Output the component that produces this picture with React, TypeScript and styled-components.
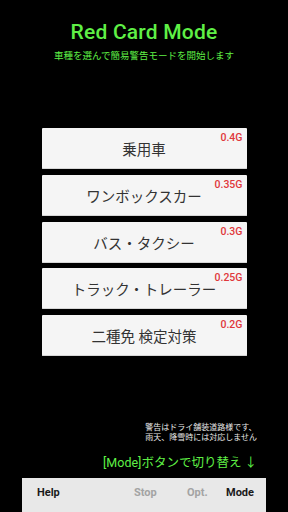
import React from "react";
import styled, { createGlobalStyle } from "styled-components";

const GlobalStyle = createGlobalStyle`
  html, body {
    margin: 0;
    padding: 0;
    background: #000;
  }
  body {
    font-family: Roboto, "Noto Sans CJK JP", sans-serif;
  }
`;

const Screen = styled.div`
  width: 288px;
  height: 512px;
  background: #000;
  display: flex;
  flex-direction: column;
  align-items: center;
  overflow: hidden;
`;

const Title = styled.h1`
  margin: 18px 0 0;
  font-size: 21px;
  font-weight: 500;
  color: #5ff046;
  line-height: 28px;
  letter-spacing: 0.2px;
`;

const Subtitle = styled.div`
  margin-top: 3px;
  font-size: 9.5px;
  color: #5ff046;
  line-height: 13px;
`;

const CarList = styled.div`
  margin-top: 66px;
  display: flex;
  flex-direction: column;
  gap: 5.75px;
  width: 205px;
`;

const CarButton = styled.button`
  position: relative;
  height: 41px;
  width: 100%;
  border: none;
  border-radius: 1px;
  background: #f5f5f5;
  box-shadow: inset 0 -1px 0 #d6d6d6;
  color: #333;
  font-family: Roboto, "Noto Sans CJK JP", sans-serif;
  font-size: 14.5px;
  padding: 0;
  display: flex;
  align-items: center;
  justify-content: center;
`;

const Badge = styled.span`
  position: absolute;
  top: 4px;
  right: 4px;
  font-size: 10.5px;
  font-weight: 500;
  color: #e0383b;
  line-height: 12px;
`;

const Notice = styled.div`
  align-self: flex-end;
  margin: 67px 31px 0 0;
  font-size: 8px;
  line-height: 10px;
  color: #e8e8e8;
  text-align: left;
`;

const Hint = styled.div`
  align-self: flex-end;
  margin: 12px 31px 0 0;
  font-size: 12.5px;
  color: #5ff046;
  line-height: 16px;
`;

const BottomBar = styled.nav`
  margin-top: 7px;
  width: 244px;
  flex: 1;
  background: #e8e8e8;
  display: flex;
  align-items: flex-start;
  padding: 8px 0 0 15px;
  box-sizing: border-box;
  font-size: 11px;
  font-weight: 700;
`;

const TabLabel = styled.span<{ $dim?: boolean; $w: number }>`
  width: ${(p) => p.$w}px;
  color: ${(p) => (p.$dim ? "#a3a3a3" : "#1a1a1a")};
  line-height: 14px;
`;

const cars = [
  { name: "乗用車", g: "0.4G" },
  { name: "ワンボックスカー", g: "0.35G" },
  { name: "バス・タクシー", g: "0.3G" },
  { name: "トラック・トレーラー", g: "0.25G" },
  { name: "二種免 検定対策", g: "0.2G" },
];

const App = () => {
  return (
    <Screen>
      <GlobalStyle />
      <Title>Red Card Mode</Title>
      <Subtitle>車種を選んで簡易警告モードを開始します</Subtitle>
      <CarList>
        {cars.map((c) => (
          <CarButton key={c.name}>
            {c.name}
            <Badge>{c.g}</Badge>
          </CarButton>
        ))}
      </CarList>
      <Notice>
        警告はドライ舗装道路様です、
        <br />
        雨天、降雪時には対応しません
      </Notice>
      <Hint>[Mode]ボタンで切り替え ↓</Hint>
      <BottomBar>
        <TabLabel $w={97}>Help</TabLabel>
        <TabLabel $w={53} $dim>
          Stop
        </TabLabel>
        <TabLabel $w={39} $dim>
          Opt.
        </TabLabel>
        <TabLabel $w={40}>Mode</TabLabel>
      </BottomBar>
    </Screen>
  );
};

export default App;
